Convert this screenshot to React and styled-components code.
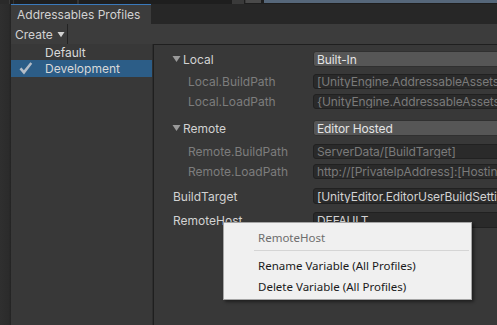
import React from "react";
import styled, { createGlobalStyle } from "styled-components";

const Global = createGlobalStyle`
  html, body { margin: 0; padding: 0; background: #2e2e2e; }
  body { font-family: Inter, "Noto Sans", sans-serif; font-size: 12px; }
`;

const Screen = styled.div`
  position: relative;
  width: 497px;
  height: 325px;
  overflow: hidden;
  display: flex;
  flex-direction: column;
  background: #2e2e2e;
`;

const TopStrip = styled.div`
  height: 4px;
  display: flex;
  background: #1e1e1e;
`;

const StripBlock = styled.div`
  width: ${(p) => p.w}px;
  height: ${(p) => p.h || 4}px;
  background: ${(p) => p.c || "transparent"};
  flex: ${(p) => (p.grow ? 1 : "none")};
`;

const Body = styled.div`
  flex: 1;
  display: flex;
  min-height: 0;
`;

const Gutter = styled.div`
  width: 11px;
  flex: none;
  background: linear-gradient(to right, #2f2f2f, #2b2b2b 80%, #232323);
`;

const Window = styled.div`
  flex: 1;
  display: flex;
  flex-direction: column;
  min-width: 0;
`;

const TabBar = styled.div`
  height: 20px;
  display: flex;
  background: #272727;
`;

const Tab = styled.div`
  width: 140px;
  border-top: 1px solid #3a79bb;
  background: #3c3c3c;
  color: #d2d2d2;
  font-size: 12px;
  padding-left: 6px;
  box-sizing: border-box;
  display: flex;
  align-items: center;
`;

const Toolbar = styled.div`
  height: 20px;
  display: flex;
  background: #3c3c3c;
`;

const CreateButton = styled.div`
  width: 57px;
  box-sizing: border-box;
  border-right: 1px solid #232323;
  display: flex;
  align-items: center;
  padding-left: 4px;
  gap: 4px;
  color: #d2d2d2;
  font-size: 12px;
`;

const Content = styled.div`
  flex: 1;
  display: flex;
  min-height: 0;
`;

const ProfileList = styled.div`
  width: 141px;
  flex: none;
  background: #383838;
  display: flex;
  flex-direction: column;
`;

const ProfileRow = styled.div`
  height: ${(p) => (p.selected ? 17 : 16)}px;
  display: flex;
  align-items: center;
  padding-left: 34px;
  position: relative;
  color: #d8d8d8;
  font-size: 12px;
  background: ${(p) => (p.selected ? "#2c5d87" : "transparent")};
`;

const Check = styled.svg`
  position: absolute;
  left: 7px;
  top: 1px;
`;

const Detail = styled.div`
  flex: 1;
  min-width: 0;
  overflow: hidden;
  background: #383838;
  border-left: 1px solid #1f1f1f;
  border-top: 1px solid #1f1f1f;
  margin-left: 1px;
  padding-top: 6px;
  display: flex;
  flex-direction: column;
`;

const PropRow = styled.div`
  display: flex;
  align-items: center;
  height: ${(p) => (p.tall ? 16 : 15)}px;
  margin-top: ${(p) => p.gap || 0}px;
`;

const Label = styled.div`
  width: 159px;
  box-sizing: border-box;
  flex: none;
  display: flex;
  align-items: center;
  gap: 2px;
  padding-left: ${(p) => p.indent}px;
  color: ${(p) => (p.dim ? "#7d7d7d" : "#d2d2d2")};
  font-size: 12px;
  white-space: nowrap;
`;

const Field = styled.div`
  flex: none;
  width: 220px;
  height: 100%;
  box-sizing: border-box;
  border-radius: 3px;
  padding-left: 3px;
  display: flex;
  align-items: center;
  white-space: nowrap;
  overflow: hidden;
  font-size: 12px;
  letter-spacing: -0.1px;
  background: ${(p) => (p.dropdown ? "#565656" : "#2a2a2a")};
  border: 1px solid ${(p) => (p.dropdown ? "#303030" : "#212121")};
  color: ${(p) => (p.dropdown ? "#e4e4e4" : p.dim ? "#7a7a7a" : "#d2d2d2")};
`;

const Menu = styled.div`
  position: absolute;
  left: 223px;
  top: 222px;
  width: 249px;
  height: 78px;
  box-sizing: border-box;
  background: #f0f0f0;
  border: 1px solid #a5a5a5;
  box-shadow: 2px 2px 3px rgba(0, 0, 0, 0.45);
  font-family: "Noto Sans", "Noto Sans CJK KR", sans-serif;
  font-size: 11.5px;
  display: flex;
  flex-direction: column;
  padding-top: 4px;
`;

const MenuItem = styled.div`
  height: 20px;
  display: flex;
  align-items: center;
  padding-left: 34px;
  color: ${(p) => (p.disabled ? "#6d6d6d" : "#1a1a1a")};
  margin-top: ${(p) => p.gap || 0}px;
`;

const MenuSeparator = styled.div`
  height: 1px;
  margin: 3px 2px 0 30px;
  background: #d5d5d5;
`;

const Triangle = ({ color = "#9a9a9a", size = 9 }) => (
  <svg width={size} height={size - 1} viewBox="0 0 9 8">
    <path d="M0.5 1 L8.5 1 L4.5 7 Z" fill={color} />
  </svg>
);

const rows = [
  { label: "Local", header: true, value: "Built-In", gap: 0 },
  { label: "Local.BuildPath", sub: true, value: "[UnityEngine.AddressableAssets.Settings", gap: 7 },
  { label: "Local.LoadPath", sub: true, value: "{UnityEngine.AddressableAssets.Settings", gap: 5 },
  { label: "Remote", header: true, value: "Editor Hosted", gap: 11 },
  { label: "Remote.BuildPath", sub: true, value: "ServerData/[BuildTarget]", gap: 8 },
  { label: "Remote.LoadPath", sub: true, value: "http://[PrivateIpAddress]:[HostingServicePort]", gap: 5 },
  { label: "BuildTarget", value: "[UnityEditor.EditorUserBuildSettings.activeBuildTarget]", gap: 9, tall: true },
  { label: "RemoteHost", value: "DEFAULT", gap: 8, tall: true },
];

export default function App() {
  return (
    <Screen>
      <Global />
      <TopStrip>
        <StripBlock w={9} c="#2a2a2a" />
        <StripBlock w={1} c="#3a3a3a" />
        <StripBlock w={3} />
        <StripBlock w={1} c="#333" />
        <StripBlock w={63} />
        <StripBlock w={1} c="#333" />
        <StripBlock w={1} c="#333" />
        <StripBlock w={153} />
        <StripBlock w={12} c="#3a3a3a" />
        <StripBlock w={1} />
        <StripBlock w={1} c="#3a3a3a" h={3} />
        <StripBlock w={15} c="#4a4a4a" h={3} />
        <StripBlock w={3} />
        <StripBlock grow c="#56677a" h={3} />
      </TopStrip>
      <Body>
        <Gutter />
        <Window>
          <TabBar>
            <Tab>Addressables Profiles</Tab>
          </TabBar>
          <Toolbar>
            <CreateButton>
              Create
              <Triangle color="#d2d2d2" size={8} />
            </CreateButton>
          </Toolbar>
          <Content>
            <ProfileList>
              <ProfileRow>Default</ProfileRow>
              <ProfileRow selected>
                <Check width="15" height="15" viewBox="0 0 15 15">
                  <path
                    d="M1.5 8.2 L3.4 6.4 L5.9 9.2 L12.4 1.2 L14.2 2.8 L6 13.4 Z"
                    fill="#b4bcc6"
                  />
                </Check>
                Development
              </ProfileRow>
            </ProfileList>
            <Detail>
              {rows.map((r) => (
                <PropRow key={r.label} gap={r.gap} tall={r.header || r.tall}>
                  <Label indent={r.sub ? 34 : r.header ? 18 : 19} dim={r.sub}>
                    {r.header && <Triangle />}
                    {r.label}
                  </Label>
                  <Field dropdown={r.header} dim={r.sub}>
                    {r.value}
                  </Field>
                </PropRow>
              ))}
            </Detail>
          </Content>
        </Window>
      </Body>
      <Menu>
        <MenuItem disabled>RemoteHost</MenuItem>
        <MenuSeparator />
        <MenuItem gap={4}>Rename Variable (All Profiles)</MenuItem>
        <MenuItem gap={1}>Delete Variable (All Profiles)</MenuItem>
      </Menu>
    </Screen>
  );
}
